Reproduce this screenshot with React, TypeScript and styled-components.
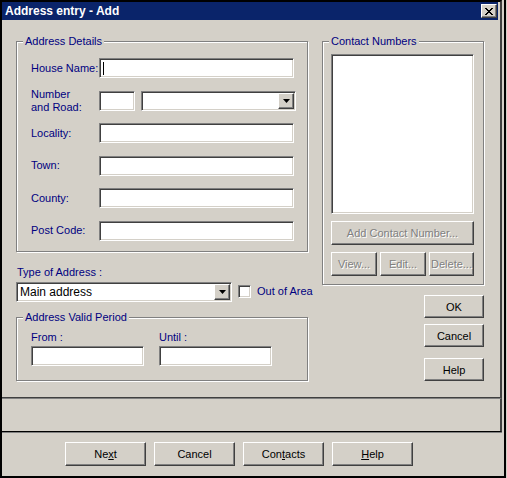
import React from "react";
import styled, { createGlobalStyle, css } from "styled-components";

const GlobalStyle = createGlobalStyle`
  html, body {
    margin: 0;
    padding: 0;
    background: #d4d0c8;
  }
  body {
    font-family: "Liberation Sans", Arial, sans-serif;
    font-size: 11px;
    color: #000080;
  }
`;

const sunken = css`
  box-sizing: border-box;
  background: #fff;
  border: 1px solid;
  border-color: #808080 #fff #fff #808080;
  box-shadow: inset 1px 1px 0 #404040, inset -1px -1px 0 #d4d0c8;
`;

const raised = css`
  box-sizing: border-box;
  background: #d4d0c8;
  border: 1px solid;
  border-color: #fff #404040 #404040 #fff;
  box-shadow: inset -1px -1px 0 #808080, inset 1px 1px 0 #d4d0c8;
`;

const Screen = styled.div`
  width: 506px;
  height: 478px;
  box-sizing: border-box;
  border-left: 2px solid #000;
  border-right: 2px solid #000;
  border-bottom: 2px solid #000;
  background: #d4d0c8;
  display: flex;
  flex-direction: column;
  align-items: flex-start;
`;

const Dialog = styled.div`
  width: 500px;
  height: 398px;
  box-sizing: border-box;
  border-top: 2px solid #000;
  border-right: 2px solid #404040;
  border-bottom: 1px solid #404040;
  padding-right: 2px;
  display: flex;
  flex-direction: column;
`;

const TitleBar = styled.div`
  height: 18px;
  flex: none;
  background: #0a246a;
  color: #fff;
  font-weight: bold;
  font-size: 12px;
  display: flex;
  align-items: center;
  justify-content: space-between;
  padding: 0 1px 0 3px;
`;

const CloseButton = styled.div`
  ${raised}
  width: 16px;
  height: 14px;
  display: flex;
  align-items: center;
  justify-content: center;
`;

const Body = styled.div`
  display: flex;
  padding: 15px 0 0 14px;
`;

const LeftColumn = styled.div`
  width: 292px;
  display: flex;
  flex-direction: column;
`;

const RightColumn = styled.div`
  width: 162px;
  margin-left: 14px;
  display: flex;
  flex-direction: column;
`;

const GroupBox = styled.fieldset`
  margin: 0;
  padding: 0;
  min-width: 0;
  border: 1px solid #808080;
  box-shadow: inset 1px 1px 0 #fff, 1px 1px 0 #fff;
`;

const Legend = styled.legend`
  margin-left: 6px;
  padding: 0 2px;
  line-height: 13px;
  background: #d4d0c8;
  color: #000080;
`;

const AddressGrid = styled.div`
  display: grid;
  grid-template-columns: 68px auto;
  grid-auto-rows: 20px;
  row-gap: 12.6px;
  padding: 10px 0 10px 14px;
`;

const FieldLabel = styled.div`
  line-height: 13px;
  align-self: center;
  white-space: nowrap;
`;

const TextBox = styled.div<{ $width: number }>`
  ${sunken}
  width: ${(p) => p.$width}px;
  height: 20px;
  display: flex;
  align-items: center;
  padding-left: 3px;
`;

const Caret = styled.span`
  width: 1px;
  height: 13px;
  background: #000;
`;

const NumberRoad = styled.div`
  display: flex;
  gap: 6px;
`;

const Combo = styled.div<{ $width: number }>`
  ${sunken}
  width: ${(p) => p.$width}px;
  height: 20px;
  flex: none;
  padding: 1px 1px 1px 3px;
  display: flex;
  align-items: center;
  justify-content: space-between;
  color: #000;
  font-size: 12px;
`;

const DropButton = styled.div`
  ${raised}
  width: 16px;
  height: 16px;
  flex: none;
  display: flex;
  align-items: center;
  justify-content: center;
`;

const TypeLabel = styled.div`
  line-height: 13px;
  margin: 14px 0 3px 1px;
`;

const TypeRow = styled.div`
  display: flex;
  align-items: center;
  height: 20px;
  white-space: nowrap;
`;

const CheckBox = styled.div`
  ${sunken}
  width: 13px;
  height: 13px;
  flex: none;
  margin: 0 6px 0 6px;
`;

const OutOfArea = styled.span`
  flex: none;
  line-height: 13px;
`;

const PeriodGroup = styled(GroupBox)`
  margin-top: 9px;
`;

const PeriodGrid = styled.div`
  display: grid;
  grid-template-columns: 113px 113px;
  column-gap: 15px;
  row-gap: 2px;
  padding: 7px 0 14px 14px;
`;

const SmallLabel = styled.div`
  line-height: 13px;
`;

const ContactBody = styled.div`
  padding: 6px 9px 8px 8px;
  display: flex;
  flex-direction: column;
`;

const ListBox = styled.div`
  ${sunken}
  width: 143px;
  height: 160px;
`;

const Button = styled.button<{ $width: number; $height: number }>`
  ${raised}
  width: ${(p) => p.$width}px;
  height: ${(p) => p.$height}px;
  padding: 0;
  font-family: "Liberation Sans", Arial, sans-serif;
  font-size: 11px;
  color: #000;
  flex: none;
  &:disabled {
    color: #808080;
    text-shadow: 1px 1px 0 #fff;
  }
`;

const AddContactButton = styled(Button)`
  margin-top: 7px;
`;

const ContactActions = styled.div`
  display: flex;
  justify-content: space-between;
  margin-top: 7px;
`;

const SideButtons = styled.div`
  display: flex;
  flex-direction: column;
  align-items: flex-end;
  margin-top: 10px;
  gap: 6px;
  & > :last-child {
    margin-top: 5px;
  }
`;

const StatusPanel = styled.div`
  width: 500px;
  height: 34px;
  box-sizing: border-box;
  border-top: 1px solid #808080;
  border-right: 2px solid #404040;
  border-bottom: 1px solid #000;
  box-shadow: 0 1px 0 #808080;
`;

const ButtonRow = styled.div`
  display: flex;
  gap: 8px;
  padding: 10px 0 0 63px;
`;

const Arrow = () => (
  <svg width="7" height="4" viewBox="0 0 7 4">
    <polygon points="0,0 7,0 3.5,4" fill="#000" />
  </svg>
);

const CloseGlyph = () => (
  <svg width="8" height="7" viewBox="0 0 8 7" shapeRendering="crispEdges">
    <path d="M0 0h2l2 2.5L6 0h2L5 3.5 8 7H6L4 4.5 2 7H0l3-3.5z" fill="#000" />
  </svg>
);

const addressRows = ["Locality:", "Town:", "County:", "Post Code:"];

export default function App() {
  return (
    <>
      <GlobalStyle />
      <Screen>
        <Dialog>
          <TitleBar>
            <span>Address entry - Add</span>
            <CloseButton>
              <CloseGlyph />
            </CloseButton>
          </TitleBar>
          <Body>
            <LeftColumn>
              <GroupBox>
                <Legend>Address Details</Legend>
                <AddressGrid>
                  <FieldLabel>House Name:</FieldLabel>
                  <TextBox $width={195}>
                    <Caret />
                  </TextBox>
                  <FieldLabel>
                    Number
                    <br />
                    and Road:
                  </FieldLabel>
                  <NumberRoad>
                    <TextBox $width={36} />
                    <Combo $width={155}>
                      <span />
                      <DropButton>
                        <Arrow />
                      </DropButton>
                    </Combo>
                  </NumberRoad>
                  {addressRows.map((label) => (
                    <React.Fragment key={label}>
                      <FieldLabel>{label}</FieldLabel>
                      <TextBox $width={195} />
                    </React.Fragment>
                  ))}
                </AddressGrid>
              </GroupBox>
              <TypeLabel>Type of Address :</TypeLabel>
              <TypeRow>
                <Combo $width={216}>
                  <span>Main address</span>
                  <DropButton>
                    <Arrow />
                  </DropButton>
                </Combo>
                <CheckBox />
                <OutOfArea>Out of Area</OutOfArea>
              </TypeRow>
              <PeriodGroup>
                <Legend>Address Valid Period</Legend>
                <PeriodGrid>
                  <SmallLabel>From :</SmallLabel>
                  <SmallLabel>Until :</SmallLabel>
                  <TextBox $width={113} />
                  <TextBox $width={113} />
                </PeriodGrid>
              </PeriodGroup>
            </LeftColumn>
            <RightColumn>
              <GroupBox>
                <Legend>Contact Numbers</Legend>
                <ContactBody>
                  <ListBox />
                  <AddContactButton $width={143} $height={24} disabled>
                    Add Contact Number...
                  </AddContactButton>
                  <ContactActions>
                    <Button $width={46} $height={24} disabled>
                      View...
                    </Button>
                    <Button $width={46} $height={24} disabled>
                      Edit...
                    </Button>
                    <Button $width={45} $height={24} disabled>
                      Delete...
                    </Button>
                  </ContactActions>
                </ContactBody>
              </GroupBox>
              <SideButtons>
                <Button $width={60} $height={23}>OK</Button>
                <Button $width={60} $height={23}>Cancel</Button>
                <Button $width={60} $height={23}>Help</Button>
              </SideButtons>
            </RightColumn>
          </Body>
        </Dialog>
        <StatusPanel />
        <ButtonRow>
          <Button $width={81} $height={24}>
            Ne<u>x</u>t
          </Button>
          <Button $width={81} $height={24}>Cancel</Button>
          <Button $width={81} $height={24}>
            Con<u>t</u>acts
          </Button>
          <Button $width={81} $height={24}>
            <u>H</u>elp
          </Button>
        </ButtonRow>
      </Screen>
    </>
  );
}
